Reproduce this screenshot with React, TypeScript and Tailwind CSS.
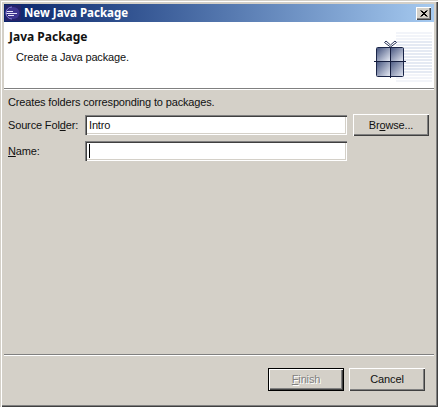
const hatch = [33, 36, 39, 42, 45, 48, 51, 54, 57, 60, 63, 66, 69, 72, 75, 78, 81];

export default function App() {
  const bevelBtn = "shadow-[inset_1px_1px_0_#ffffff,inset_-1px_-1px_0_#404040,inset_-2px_-2px_0_#808080]";
  const sunken = "shadow-[inset_1px_1px_0_#808080,inset_2px_2px_0_#404040,inset_-1px_-1px_0_#ffffff,inset_-2px_-2px_0_#d4d0c8]";
  return (
    <div className="w-[438px] h-[407px] bg-[#d4d0c8] flex flex-col p-[4px] text-[11px] tracking-[-0.15px] leading-[13px] text-[#111111] shadow-[inset_1px_1px_0_#d4d0c8,inset_2px_2px_0_#ffffff,inset_-1px_-1px_0_#404040,inset_-2px_-2px_0_#808080] font-['Liberation_Sans',sans-serif] overflow-hidden">
      <div className="h-[18px] shrink-0 flex items-center bg-gradient-to-r from-[#0a246a] to-[#a6caf0] pl-[1px] pr-[3px]">
        <svg width="16" height="16" viewBox="0 0 16 16" className="shrink-0">
          <rect width="16" height="16" fill="#25236a" />
          <circle cx="8.5" cy="8" r="6" fill="#3f3590" />
          <path d="M2 6.5h6M1 8.5h11M3 10.5h6" stroke="#e8e4f8" strokeWidth="1" />
          <path d="M7 2a6 6 0 0 0 0 12" fill="none" stroke="#8f84e0" strokeWidth="1" />
        </svg>
        <span className="ml-[3px] -mt-[1px] tracking-normal font-bold text-white text-[11.5px] font-['Noto_Sans',sans-serif]">New Java Package</span>
        <button className={`ml-auto w-[15px] h-[13px] bg-[#d4d0c8] flex items-center justify-center ${bevelBtn}`}>
          <svg width="8" height="7" viewBox="0 0 8 7">
            <path d="M0.5 0.5L6.5 6.5M1.5 0.5L7.5 6.5M6.5 0.5L0.5 6.5M7.5 0.5L1.5 6.5" stroke="#000" strokeWidth="1" />
          </svg>
        </button>
      </div>

      <div className="h-[66px] shrink-0 bg-white flex justify-between">
        <div className="pl-[5px] pt-[8px]">
          <div className="font-bold tracking-normal text-[12px] font-['Noto_Sans',sans-serif]">Java Package</div>
          <div className="pl-[7px] mt-[8px]">Create a Java package.</div>
        </div>
        <svg width="64" height="62" viewBox="368 25 64 62" className="mr-[2px] mt-[3px] shrink-0">
          <defs>
            <linearGradient id="q" x1="0" y1="0" x2="1" y2="1">
              <stop offset="0" stopColor="#46557f" />
              <stop offset="1" stopColor="#e6eaf4" />
            </linearGradient>
          </defs>
          {hatch.map((y) => (
            <path
              key={y}
              d={y < 46 || y > 76 ? `M396 ${y}H432` : `M404 ${y}H432`}
              stroke={y < 42 || y > 74 ? "#eef1f7" : "#dde3ef"}
              strokeWidth="1.5"
            />
          ))}
          <rect x="377" y="48" width="13" height="13" fill="url(#q)" />
          <rect x="390" y="48" width="14" height="13" fill="url(#q)" />
          <rect x="377" y="61" width="13" height="15" fill="url(#q)" />
          <rect x="390" y="61" width="14" height="15" fill="url(#q)" />
          <rect x="376.5" y="47.5" width="27" height="29" rx="1" fill="none" stroke="#1a2548" />
          <path d="M390.5 46V78M374 61.5H406" stroke="#141d3e" strokeWidth="1" />
          <path d="M390.5 47L384.5 42.5L386 41L390.5 45L395 41L396.5 42.5Z" fill="#fff" stroke="#2a3558" strokeWidth="1" />
        </svg>
      </div>

      <div className="h-[2px] shrink-0 border-t border-t-[#808080] border-b border-b-white" />

      <div className="flex-1 flex flex-col px-[4px] pt-[6px]">
        <div>Creates folders corresponding to packages.</div>
        <div className="flex items-center mt-[5px] h-[22px]">
          <span className="w-[77px] shrink-0">Source Fol<span className="underline">d</span>er:</span>
          <div className={`w-[262px] h-[20px] bg-white flex items-center pl-[4px] ${sunken}`}>Intro</div>
          <button className={`ml-[6px] w-[76px] h-[22px] bg-[#d4d0c8] ${bevelBtn}`}>Br<span className="underline">o</span>wse...</button>
        </div>
        <div className="flex items-center mt-[5px] h-[20px]">
          <span className="w-[77px] shrink-0"><span className="underline">N</span>ame:</span>
          <div className={`w-[262px] h-[20px] bg-white flex items-center pl-[4px] ${sunken}`}>
            <div className="w-px h-[14px] bg-black" />
          </div>
        </div>
      </div>

      <div className="h-[2px] shrink-0 border-t border-t-[#808080] border-b border-b-white" />

      <div className="h-[47px] shrink-0 flex justify-end items-start pt-[12px] pr-[9px] gap-[5px]">
        <button className={`w-[76px] h-[23px] bg-[#d4d0c8] border border-black text-[#808080] [text-shadow:1px_1px_0_#ffffff] ${bevelBtn}`}><span className="underline">F</span>inish</button>
        <button className={`w-[76px] h-[23px] bg-[#d4d0c8] ${bevelBtn}`}>Cancel</button>
      </div>
    </div>
  );
}
